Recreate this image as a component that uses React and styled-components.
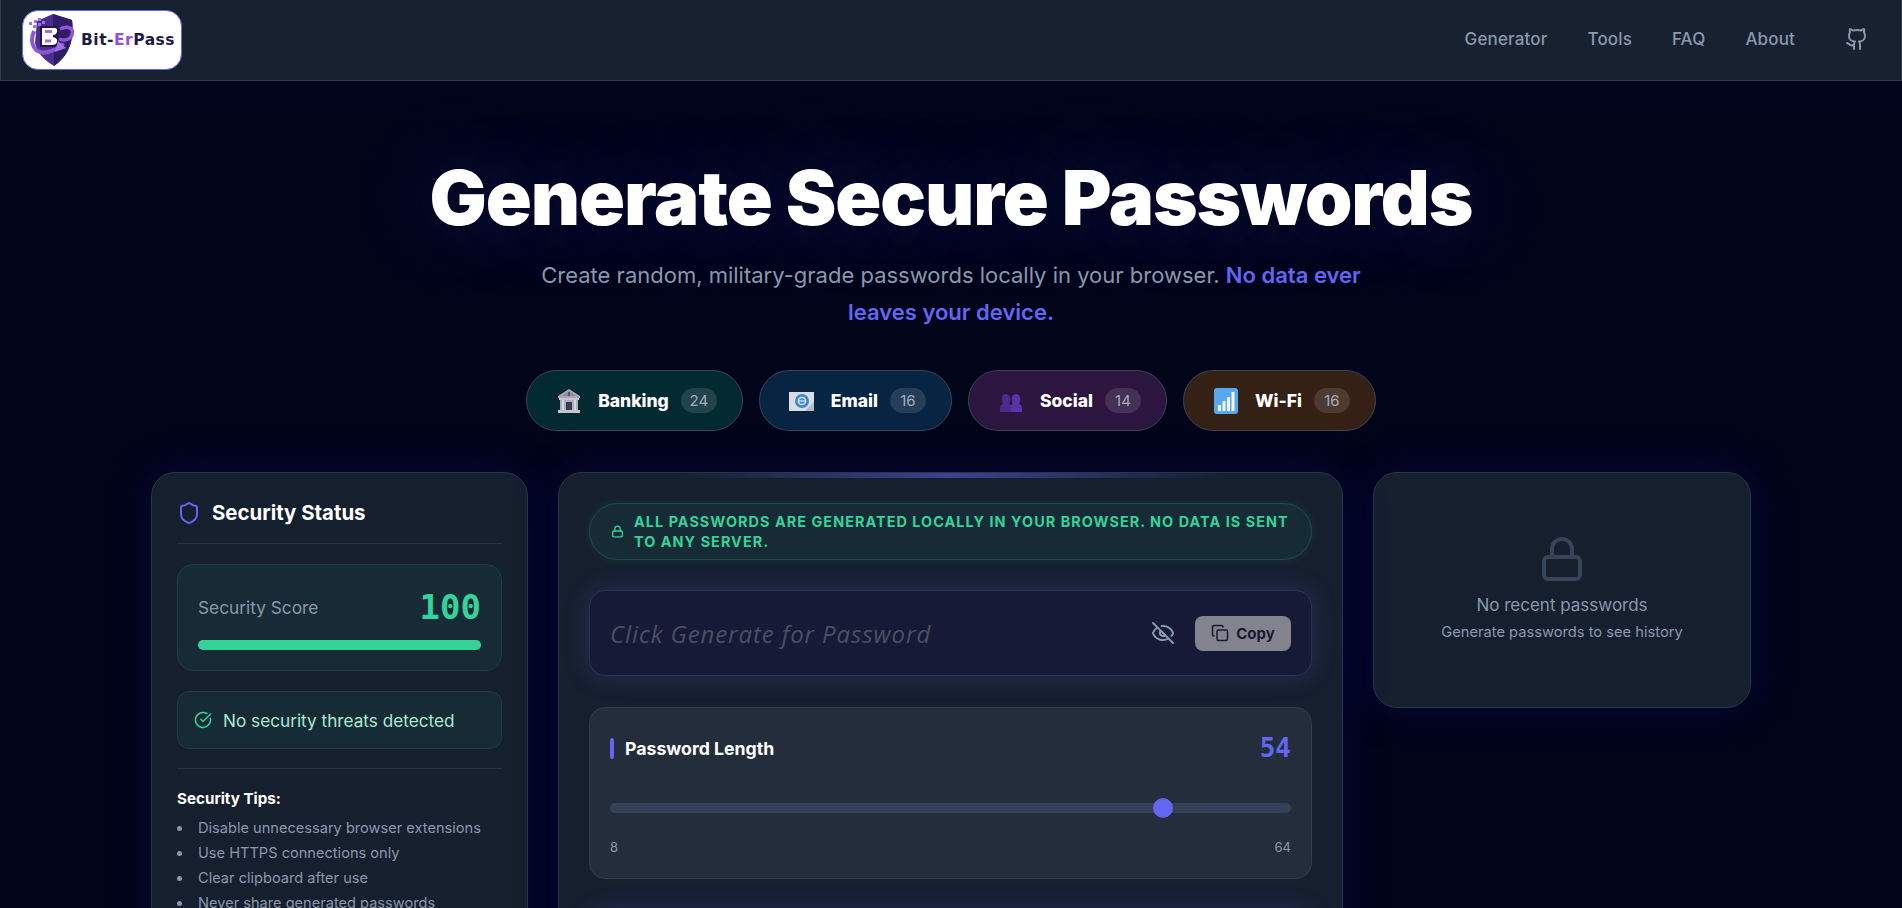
import React from 'react'
import styled, { createGlobalStyle } from 'styled-components'
import { Shield, CircleCheckBig, Lock, EyeOff, Copy, Github } from 'lucide-react'

const GlobalStyle = createGlobalStyle`
    * { box-sizing: border-box; }
    html, body {
        margin: 0;
        height: 908px;
        overflow: hidden;
        background: #02041a;
    }
    body {
        font-family: 'Inter', 'Liberation Sans', sans-serif;
        color: #fff;
    }
`

const BankIcon = () => (
    <svg width="26" height="26" viewBox="0 0 26 26">
        <path d="M13 1 L24 8 V10 H2 V8 Z" fill="#a7a7b4" />
        <path d="M13 3 L20 8 H6 Z" fill="#8b8b9a" />
        <rect x="12" y="4" width="2" height="4" fill="#6b3fb0" />
        <rect x="3" y="10" width="20" height="2" fill="#c5c5cf" />
        <rect x="4" y="12" width="18" height="10" fill="#b0b0bc" />
        <rect x="6" y="12" width="2" height="10" fill="#d6d6de" />
        <rect x="18" y="12" width="2" height="10" fill="#d6d6de" />
        <rect x="10" y="14" width="6" height="8" fill="#3b3d52" />
        <rect x="2" y="22" width="22" height="3" fill="#c5c5cf" />
    </svg>
)

const MailIcon = () => (
    <svg width="26" height="26" viewBox="0 0 26 26">
        <rect x="0" y="4" width="25" height="19" fill="#d9dce3" />
        <path d="M16 23 L25 14 V23 Z" fill="#b6bac6" />
        <circle cx="13" cy="13" r="7" fill="#3f86cc" />
        <circle cx="13" cy="13" r="3.6" fill="none" stroke="#d7e8f8" strokeWidth="1.5" />
        <rect x="10" y="12.4" width="6" height="1.2" fill="#d7e8f8" />
    </svg>
)

const PeopleIcon = () => (
    <svg width="26" height="26" viewBox="0 0 26 26">
        <path d="M2 24 V20 Q2 17 5 16 Q3 13 4 9 Q5 6 8 6 Q11 6 12 9 Q13 13 11 16 L13 17 V24 Z" fill="#4c2a90" />
        <path d="M13 24 V17 L15 16 Q13 13 14 9 Q15 6 18 6 Q21 6 22 9 Q23 13 21 16 Q24 17 24 20 V24 Z" fill="#5a34a6" />
    </svg>
)

const SignalIcon = () => (
    <svg width="26" height="26" viewBox="0 0 26 26">
        <rect x="1" y="0" width="24" height="26" rx="3" fill="#5aa7ee" />
        <rect x="5" y="17" width="3" height="6" fill="#f2f7fd" />
        <rect x="9.5" y="13" width="3" height="10" fill="#f2f7fd" />
        <rect x="14" y="9" width="3" height="14" fill="#f2f7fd" />
        <rect x="18.5" y="4" width="3" height="19" fill="#f2f7fd" />
    </svg>
)

// shield with pixel trail and looping arrow
const LogoMark = () => (
    <svg width="52" height="54" viewBox="0 0 52 54">
        <path d="M27 1 L46 7 C48 24 45 41 28 53 C18 47 11 40 9 30 L11 8 Z" fill="#4a2f91" />
        <path d="M27 1 L46 7 C48 24 45 41 28 53 Z" fill="#2f1d66" />
        <g fill="#a46fe0">
            <rect x="3" y="9" width="3" height="3" />
            <rect x="8" y="7" width="3" height="3" />
            <rect x="7" y="12" width="3" height="3" />
            <rect x="12" y="10" width="3" height="3" />
            <rect x="12" y="5" width="3" height="3" />
            <rect x="16" y="8" width="3" height="3" />
        </g>
        <path d="M15 14 H28 Q33 14 32 19 Q31 23 27 23 Q33 24 32 29 Q31 33 26 33 H15 Z" fill="#fff" stroke="#1f1550" strokeWidth="2" />
        <path d="M19 18.5 H26 M19 28 H25" stroke="#a46fe0" strokeWidth="3" />
        <path d="M34 16 C42 12 48 15 46 22 C44 27 38 28 33 26" fill="none" stroke="#8f55d6" strokeWidth="3.5" />
        <path d="M8 18 C3 30 8 42 22 39 C30 37 36 33 37 30" fill="none" stroke="#8f55d6" strokeWidth="4" />
        <path d="M29 39 L32 28 L40 35 Z" fill="#a46fe0" />
    </svg>
)

const chips = [
    { label: 'Banking', count: 24, bg: '#032a30', Icon: BankIcon },
    { label: 'Email', count: 16, bg: '#082443', Icon: MailIcon },
    { label: 'Social', count: 14, bg: '#2c153e', Icon: PeopleIcon },
    { label: 'Wi-Fi', count: 16, bg: '#352016', Icon: SignalIcon },
]

const tips = [
    'Disable unnecessary browser extensions',
    'Use HTTPS connections only',
    'Clear clipboard after use',
    'Never share generated passwords',
]

const App = () => {
    const lengthRatio = (54 - 8) / 56

    return (
        <Page>
            <GlobalStyle />
            <Header>
                <Logo>
                    <LogoMark />
                    <LogoText>Bit-<em>Er</em>Pass</LogoText>
                </Logo>
                <Nav>
                    <NavLink>Generator</NavLink>
                    <NavLink>Tools</NavLink>
                    <NavLink>FAQ</NavLink>
                    <NavLink>About</NavLink>
                    <GithubLink><Github size={24} strokeWidth={2} /></GithubLink>
                </Nav>
            </Header>

            <Hero>
                <Title>Generate Secure Passwords</Title>
                <Subtitle>
                    Create random, military-grade passwords locally in your browser. <strong>No data ever leaves your device.</strong>
                </Subtitle>
                <Chips>
                    {chips.map(({ label, count, bg, Icon }) => (
                        <Chip key={label} $bg={bg}>
                            <Icon />
                            <ChipLabel>{label}</ChipLabel>
                            <ChipCount>{count}</ChipCount>
                        </Chip>
                    ))}
                </Chips>
            </Hero>

            <Columns>
                <StatusCard>
                    <CardTitle>
                        <Shield size={24} color="#6366f1" strokeWidth={2} />
                        Security Status
                    </CardTitle>
                    <ScoreBox>
                        <ScoreRow>
                            <ScoreLabel>Security Score</ScoreLabel>
                            <ScoreValue>100</ScoreValue>
                        </ScoreRow>
                        <ScoreBar />
                    </ScoreBox>
                    <ThreatBox>
                        <CircleCheckBig size={18} color="#34d399" strokeWidth={2} />
                        No security threats detected
                    </ThreatBox>
                    <Divider />
                    <TipsTitle>Security Tips:</TipsTitle>
                    <TipsList>
                        {tips.map((t) => <li key={t}>{t}</li>)}
                    </TipsList>
                </StatusCard>

                <MainCard>
                    <Notice>
                        <Lock size={13} strokeWidth={2.5} />
                        <span>All passwords are generated locally in your browser. No data is sent to any server.</span>
                    </Notice>
                    <PasswordBox>
                        <Placeholder>Click Generate for Password</Placeholder>
                        <EyeButton><EyeOff size={24} strokeWidth={2} /></EyeButton>
                        <CopyButton><Copy size={18} strokeWidth={2} />Copy</CopyButton>
                    </PasswordBox>
                    <LengthPanel>
                        <LengthHead>
                            <LengthTitle>Password Length</LengthTitle>
                            <LengthValue>54</LengthValue>
                        </LengthHead>
                        <Track>
                            <Thumb style={{ left: `calc(10px + (100% - 20px) * ${lengthRatio})` }} />
                        </Track>
                        <Range>
                            <span>8</span>
                            <span>64</span>
                        </Range>
                    </LengthPanel>
                    <NextPanel />
                </MainCard>

                <HistoryCard>
                    <Lock size={48} color="#374357" strokeWidth={2} />
                    <HistoryTitle>No recent passwords</HistoryTitle>
                    <HistoryHint>Generate passwords to see history</HistoryHint>
                </HistoryCard>
            </Columns>
        </Page>
    )
}

export default App

const Page = styled.div`
    min-height: 908px;
    background:
        linear-gradient(180deg, #080a33 0, #03051f 40px, #02041a 120px);
`

const Header = styled.header`
    height: 81px;
    display: flex;
    align-items: center;
    justify-content: space-between;
    padding: 0 32px 0 21px;
    background: #182130;
    border: 1px solid #353c4c;
    border-top: none;
`

const Logo = styled.a`
    width: 160px;
    height: 60px;
    display: flex;
    align-items: center;
    padding-left: 3px;
    background: #fff;
    border: 1px solid #6366f1;
    border-radius: 16px;
`

const LogoText = styled.span`
    margin-left: 3px;
    font-family: 'DejaVu Sans', sans-serif;
    font-size: 15.5px;
    font-weight: 700;
    letter-spacing: 0.5px;
    color: #1e1b4b;
    white-space: nowrap;
    em {
        font-style: normal;
        color: #8f55d6;
    }
`

const Nav = styled.nav`
    display: flex;
    align-items: center;
    gap: 40px;
    margin-bottom: 2px;
`

const NavLink = styled.a`
    font-size: 17px;
    font-weight: 500;
    letter-spacing: 0.15px;
    color: #8a98ad;
`

const GithubLink = styled.a`
    display: flex;
    color: #8a98ad;
    margin-left: 10px;
`

const Hero = styled.section`
    display: flex;
    flex-direction: column;
    align-items: center;
    padding-top: 70px;
`

const Title = styled.h1`
    margin: 0;
    font-size: 76px;
    line-height: 92px;
    font-weight: 900;
    letter-spacing: -1.1px;
    color: #fff;
    text-shadow: 0 0 80px rgba(99, 102, 241, 0.28);
`

const Subtitle = styled.p`
    margin: 14px 0 0;
    width: 850px;
    text-align: center;
    font-size: 22px;
    line-height: 37px;
    color: #8a98ad;
    strong {
        color: #6366f1;
        font-weight: 600;
    }
`

const Chips = styled.div`
    display: flex;
    gap: 16px;
    margin-top: 39px;
`

const Chip = styled.div`
    height: 61px;
    display: flex;
    align-items: center;
    padding: 0 25px 0 29px;
    border: 1px solid #3a4558;
    border-radius: 31px;
    background: ${({ $bg }) => $bg};
`

const ChipLabel = styled.span`
    margin: 0 12px 0 16px;
    font-size: 17.5px;
    font-weight: 800;
    color: #fff;
`

const ChipCount = styled.span`
    min-width: 36px;
    height: 25px;
    padding: 0 8px;
    border-radius: 13px;
    background: rgba(255, 255, 255, 0.12);
    color: #a3adbd;
    font-size: 15px;
    line-height: 25px;
    text-align: center;
`

const Columns = styled.main`
    width: 1600px;
    margin: 41px auto 0;
    display: grid;
    grid-template-columns: 377px 785px 378px;
    gap: 30px;
    align-items: start;
`

const Card = styled.div`
    background: #161f2e;
    border: 1px solid #2c3546;
    border-radius: 24px;
    box-shadow: 0 0 40px rgba(10, 14, 90, 0.45);
`

const StatusCard = styled(Card)`
    padding: 25px;
    height: 560px;
`

const CardTitle = styled.h2`
    margin: 0;
    height: 46px;
    padding-bottom: 16px;
    display: flex;
    align-items: center;
    gap: 11px;
    font-size: 20.4px;
    font-weight: 700;
    color: #fff;
    border-bottom: 1px solid #2a3344;
`

const GreenBox = styled.div`
    background: #172b36;
    border: 1px solid #1d4140;
    border-radius: 16px;
`

const ScoreBox = styled(GreenBox)`
    margin-top: 20px;
    height: 107px;
    padding: 24px 20px 0;
`

const ScoreRow = styled.div`
    display: flex;
    align-items: center;
    justify-content: space-between;
    height: 36px;
`

const ScoreLabel = styled.span`
    font-size: 17.3px;
    color: #8a98ad;
`

const ScoreValue = styled.span`
    font-family: 'DejaVu Sans Mono', monospace;
    font-size: 34px;
    font-weight: 700;
    color: #34d399;
`

const ScoreBar = styled.div`
    height: 10px;
    margin-top: 15px;
    border-radius: 5px;
    background: #34d399;
`

const ThreatBox = styled(GreenBox)`
    margin-top: 20px;
    height: 58px;
    display: flex;
    align-items: center;
    gap: 11px;
    padding-left: 16px;
    font-size: 17.2px;
    color: #a7e9cf;
    border-radius: 12px;
`

const Divider = styled.div`
    height: 1px;
    margin-top: 19px;
    background: #2a3344;
`

const TipsTitle = styled.h3`
    margin: 21px 0 0;
    font-size: 15.2px;
    line-height: 17px;
    font-weight: 700;
    color: #fff;
`

const TipsList = styled.ul`
    margin: 9px 0 0;
    padding: 0;
    list-style: none;
    li {
        position: relative;
        padding-left: 21px;
        font-size: 14.6px;
        line-height: 25px;
        color: #8a98ad;
        white-space: nowrap;
    }
    li::before {
        content: '';
        position: absolute;
        left: 0;
        top: 10px;
        width: 5px;
        height: 5px;
        border-radius: 50%;
        background: #8a98ad;
    }
`

const MainCard = styled(Card)`
    position: relative;
    height: 700px;
    padding: 30px;
    overflow: hidden;
    &::before {
        content: '';
        position: absolute;
        top: 0;
        left: 0;
        right: 0;
        height: 5px;
        background: linear-gradient(90deg, transparent 15%, #40408f 50%, transparent 85%);
    }
`

const Notice = styled.div`
    min-height: 57px;
    display: flex;
    align-items: center;
    gap: 10px;
    padding: 0 20px 0 21px;
    background: #172b36;
    border: 1px solid #1d4d48;
    border-radius: 29px;
    box-shadow: 0 0 10px rgba(52, 211, 153, 0.12);
    font-size: 14.4px;
    line-height: 20px;
    font-weight: 700;
    letter-spacing: 1.05px;
    text-transform: uppercase;
    color: #34d399;
    svg { flex: none; }
`

const PasswordBox = styled.div`
    height: 86px;
    margin-top: 30px;
    display: flex;
    align-items: center;
    padding: 0 20px;
    background: #161a36;
    border: 1px solid #2c3350;
    border-radius: 16px;
    box-shadow: 0 0 25px rgba(80, 84, 190, 0.3);
`

const Placeholder = styled.span`
    flex: 1;
    font-family: 'Open Sans', sans-serif;
    font-style: italic;
    font-size: 24px;
    letter-spacing: 0.9px;
    color: #475163;
`

const EyeButton = styled.span`
    display: flex;
    margin-right: 20px;
    color: #8a98ad;
`

const CopyButton = styled.span`
    width: 96px;
    height: 35px;
    display: flex;
    align-items: center;
    justify-content: center;
    gap: 7px;
    border-radius: 8px;
    background: #83838f;
    color: #161a2e;
    font-size: 15px;
    font-weight: 700;
`

const LengthPanel = styled.div`
    height: 172px;
    margin-top: 31px;
    padding: 20px;
    background: #232d3c;
    border: 1px solid #323c4e;
    border-radius: 16px;
`

const LengthHead = styled.div`
    height: 40px;
    display: flex;
    align-items: center;
    justify-content: space-between;
`

const LengthTitle = styled.h3`
    margin: 0;
    padding-left: 15px;
    position: relative;
    font-size: 17.7px;
    font-weight: 700;
    color: #fff;
    &::before {
        content: '';
        position: absolute;
        left: 0;
        top: 0;
        bottom: 0;
        width: 4px;
        border-radius: 2px;
        background: #6366f1;
    }
`

const LengthValue = styled.span`
    font-family: 'DejaVu Sans Mono', monospace;
    font-size: 26px;
    font-weight: 700;
    color: #6366f1;
`

const Track = styled.div`
    position: relative;
    height: 10px;
    margin-top: 35px;
    border-radius: 5px;
    background: #354156;
`

const Thumb = styled.div`
    position: absolute;
    top: -5px;
    width: 20px;
    height: 20px;
    margin-left: -10px;
    border-radius: 50%;
    background: #6366f1;
`

const Range = styled.div`
    display: flex;
    justify-content: space-between;
    margin-top: 26px;
    font-size: 13px;
    color: #8a98ad;
`

const NextPanel = styled.div`
    height: 120px;
    margin-top: 32px;
    border-radius: 16px;
    background: #232d3c;
    box-shadow: 0 0 25px rgba(80, 84, 190, 0.3);
`

const HistoryCard = styled(Card)`
    height: 236px;
    display: flex;
    flex-direction: column;
    align-items: center;
    padding-top: 62px;
`

const HistoryTitle = styled.p`
    margin: 10px 0 0;
    font-size: 17px;
    line-height: 24px;
    color: #8a98ad;
`

const HistoryHint = styled.p`
    margin: 5px 0 0;
    font-size: 14.7px;
    line-height: 20px;
    color: #8a98ad;
`
